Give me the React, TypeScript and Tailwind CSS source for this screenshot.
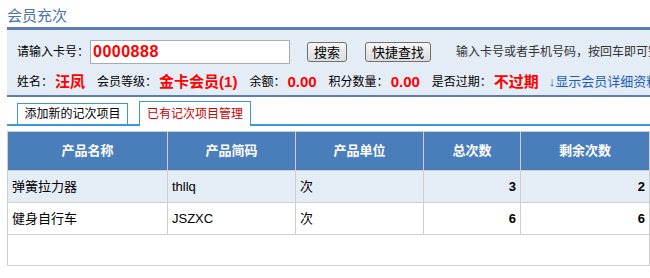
const font = { fontFamily: '"Liberation Sans", Arial, "Noto Sans CJK SC", sans-serif' };

const rows = [
  { name: "弹簧拉力器", code: "thllq", unit: "次", total: 3, left: 2 },
  { name: "健身自行车", code: "JSZXC", unit: "次", total: 6, left: 6 },
];

function Btn({ children }: { children: React.ReactNode }) {
  return (
    <button className="h-[20px] px-[6px] text-[13px] leading-none text-black border border-[#707070] rounded-[3px] bg-gradient-to-b from-[#f6f6f6] to-[#dcdcdc]">
      {children}
    </button>
  );
}

function Label({ children }: { children: React.ReactNode }) {
  return <span className="text-[12px] text-black">{children}</span>;
}

function Val({ children }: { children: React.ReactNode }) {
  return <span className="text-[15px] font-bold text-[#ff0000] ml-[2px] mr-[12px]">{children}</span>;
}

export default function App() {
  return (
    <div className="w-[650px] h-[278px] overflow-hidden bg-white" style={font}>
      <div className="w-[720px] pl-[7px] pt-[6px]">
        <h1 className="text-[15px] leading-[20px] text-[#4a72ad] h-[21px]">会员充次</h1>
        <div className="h-[3px] bg-[#5b7db1]" />
        <div className="bg-[#e4ecf5] border-b-2 border-[#5b7db1] h-[67px] pl-[10px]">
          <div className="flex items-center h-[40px] pt-[3px]">
            <Label>请输入卡号：</Label>
            <div className="ml-[1px] w-[200px] h-[24px] bg-white border border-[#a5acb5] flex items-center pl-[2px]">
              <span className="text-[16px] font-bold text-[#ff0000] tracking-[0.5px]">0000888</span>
            </div>
            <div className="ml-[17px]"><Btn>搜索</Btn></div>
            <div className="ml-[18px]"><Btn>快捷查找</Btn></div>
            <span className="ml-[25px] text-[12px] text-[#333]">输入卡号或者手机号码，按回车即可完成查找</span>
          </div>
          <div className="flex items-center h-[24px]">
            <Label>姓名：</Label>
            <Val>汪凤</Val>
            <Label>会员等级：</Label>
            <Val>金卡会员(1)</Val>
            <Label>余额：</Label>
            <Val>0.00</Val>
            <Label>积分数量：</Label>
            <Val>0.00</Val>
            <Label>是否过期：</Label>
            <Val>不过期</Val>
            <span className="-ml-[2px] text-[13px] text-[#1e5fb4]">↓显示会员详细资料</span>
          </div>
        </div>

        <div className="mt-[5px] flex items-end border-b-2 border-[#3a9ad9] h-[24px] pl-[10px] gap-[11px]">
          <div className="h-[23px] -mb-[2px] w-[111px] border border-[#3a9ad9] border-b-2 bg-white flex items-center justify-center text-[12px] text-black">
            添加新的记次项目
          </div>
          <div className="h-[25px] -mb-[2px] w-[112px] border border-[#3a9ad9] border-b-0 bg-white flex items-center justify-center text-[12px] text-[#cc0000]">
            已有记次项目管理
          </div>
        </div>

        <table className="mt-[5px] w-[643px] border-collapse text-[13px]">
          <thead>
            <tr className="bg-[#4a7ebb] text-white h-[39px]">
              <th className="w-[160px] border border-[#cfcfcf] font-bold">产品名称</th>
              <th className="w-[128px] border border-[#cfcfcf] font-bold">产品简码</th>
              <th className="w-[128px] border border-[#cfcfcf] font-bold">产品单位</th>
              <th className="w-[97px] border border-[#cfcfcf] font-bold">总次数</th>
              <th className="border border-[#cfcfcf] font-bold">剩余次数</th>
            </tr>
          </thead>
          <tbody>
            {rows.map((r, i) => (
              <tr key={r.code} className={`h-[32px] ${i === 0 ? "bg-[#e4ecf5]" : "bg-white"}`}>
                <td className="border border-[#cfcfcf] pl-[4px]">{r.name}</td>
                <td className="border border-[#cfcfcf] pl-[4px]">{r.code}</td>
                <td className="border border-[#cfcfcf] pl-[4px]">{r.unit}</td>
                <td className="border border-[#cfcfcf] pr-[4px] text-right font-bold">{r.total}</td>
                <td className="border border-[#cfcfcf] pr-[4px] text-right font-bold">{r.left}</td>
              </tr>
            ))}
            <tr className="h-[31px]">
              <td colSpan={5} className="border border-[#cfcfcf]" />
            </tr>
          </tbody>
        </table>
      </div>
    </div>
  );
}
